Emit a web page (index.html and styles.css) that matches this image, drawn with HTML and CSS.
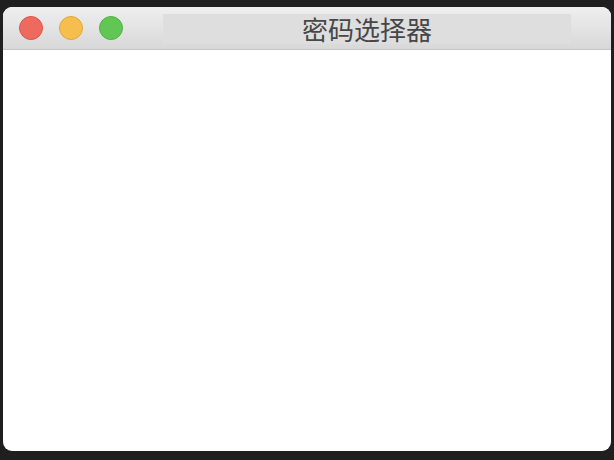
FILE: index.html
```html
<!DOCTYPE html>
<html lang="zh">
<head>
    <meta charset="UTF-8">
    <meta name="viewport" content="width=device-width, initial-scale=1.0">
    <title>密码选择器</title>
    <link rel="stylesheet" href="styles.css">
</head>
<body>

<div class="window">
    <div class="titlebar">
        <div class="lights">
            <span class="light close"></span>
            <span class="light minimize"></span>
            <span class="light zoom"></span>
        </div>
        <div class="title">密码选择器</div>
    </div>
    <div class="content"></div>
</div>

</body>
</html>
```

FILE: styles.css
```css
html, body {
    margin: 0;
    height: 100%;
}
body {
    background-color: #1f1f1f;
    padding: 7px 3px 9px 3px;
    box-sizing: border-box;
    font-family: "Noto Sans CJK SC", "Noto Sans", sans-serif;
}
.window {
    width: 608px;
    height: 444px;
    background: #fff;
    border-radius: 9px;
    overflow: hidden;
    display: flex;
    flex-direction: column;
}
.titlebar {
    height: 42px;
    flex: none;
    display: flex;
    align-items: center;
    background: linear-gradient(#efefef, #d8d8d8);
    border-bottom: 1px solid #c4c4c4;
    padding-left: 16px;
}
.lights {
    display: flex;
    gap: 16px;
}
.light {
    width: 24px;
    height: 24px;
    border-radius: 50%;
    box-sizing: border-box;
}
.close {
    background: #ee6a5f;
    border: 1px solid #e0544a;
}
.minimize {
    background: #f6be4f;
    border: 1px solid #e0a73b;
}
.zoom {
    background: #62c655;
    border: 1px solid #4fb245;
}
.title {
    margin-left: 40px;
    width: 408px;
    height: 30px;
    margin-top: 2px;
    background: #dedede;
    color: #474747;
    font-size: 26px;
    line-height: 30px;
    text-align: center;
}
.content {
    flex: 1;
}
```
